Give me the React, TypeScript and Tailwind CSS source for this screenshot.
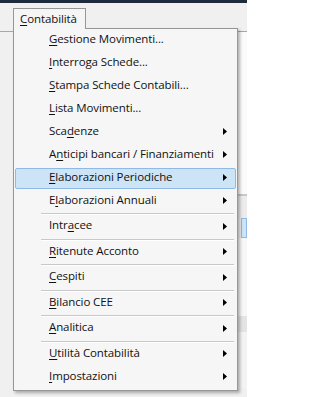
import React from "react";

type Item = {
  pre: string;
  key: string;
  post: string;
  arrow?: boolean;
  sep?: boolean;
  active?: boolean;
};

const items: Item[] = [
  { pre: "", key: "G", post: "estione Movimenti..." },
  { pre: "", key: "I", post: "nterroga Schede..." },
  { pre: "", key: "S", post: "tampa Schede Contabili..." },
  { pre: "", key: "L", post: "ista Movimenti..." },
  { pre: "Sca", key: "d", post: "enze", arrow: true },
  { pre: "A", key: "n", post: "ticipi bancari / Finanziamenti", arrow: true },
  { pre: "", key: "E", post: "laborazioni Periodiche", arrow: true, active: true },
  { pre: "E", key: "l", post: "aborazioni Annuali", arrow: true, sep: true },
  { pre: "Intr", key: "a", post: "cee", arrow: true, sep: true },
  { pre: "", key: "R", post: "itenute Acconto", arrow: true, sep: true },
  { pre: "", key: "C", post: "espiti", arrow: true, sep: true },
  { pre: "", key: "B", post: "ilancio CEE", arrow: true, sep: true },
  { pre: "", key: "A", post: "nalitica", arrow: true, sep: true },
  { pre: "", key: "U", post: "tilità Contabilità", arrow: true },
  { pre: "", key: "I", post: "mpostazioni", arrow: true },
];

function Arrow() {
  return (
    <svg width="4" height="7" viewBox="0 0 4 7" className="shrink-0 mb-[2px]">
      <polygon points="0,0 4,3.5 0,7" fill="#000" />
    </svg>
  );
}

function Row({ it }: { it: Item }) {
  return (
    <div className="h-[23px] flex items-center">
      <div
        className={
          "h-[21px] w-[221px] flex items-center pl-[33px] pr-[8px] rounded-[2px] border " +
          (it.active ? "bg-[#cde4f7] border-[#8fb9e6]" : "border-transparent")
        }
      >
        <span className="flex-1 whitespace-nowrap text-[#111] pb-[4px]">
          {it.pre}
          <span className="underline underline-offset-[2px]">{it.key}</span>
          {it.post}
        </span>
        {it.arrow && <Arrow />}
      </div>
    </div>
  );
}

export default function App() {
  return (
    <div
      className="relative w-[247px] h-[397px] overflow-hidden bg-[#f0f0f0] text-[11.5px] tracking-[-0.1px] leading-none"
      style={{ fontFamily: '"Open Sans", "Noto Sans", sans-serif' }}
    >
      {/* background window */}
      <div className="h-[3px] bg-[#1d2b3c]" />
      <div className="h-[29px] bg-[#f0f0f0] border-b border-[#a7a7a7]" />
      <div className="flex">
        <div className="w-[238px]" />
        <div className="flex-1 flex flex-col">
          <div className="h-[162px] bg-[#fbfbfb]" />
          <div className="h-[2px] bg-[#c8c8c8]" />
          <div className="h-[22px] bg-[#ececec]" />
          <div className="h-[20px] bg-[#cde4f7] border border-[#8fb9e6] ml-[3px]" />
          <div className="h-[78px] bg-[#f7f7f7]" />
          <div className="h-[16px] bg-[#e4e4e4]" />
          <div className="h-[56px] bg-[#f3f3f3]" />
        </div>
      </div>

      {/* menu overlay */}
      <div className="absolute left-[13px] top-[8px] flex flex-col">
        <div className="relative z-10 w-[73px] h-[21px] -mb-[1px] bg-[#f5f5f5] border border-b-0 border-[#979797] flex items-center pl-[6px] text-[#111]">
          <span className="pb-[1px]">
            <span className="underline underline-offset-[2px]">C</span>ontabilità
          </span>
        </div>
        <div className="w-[225px] bg-[#f6f6f6] border border-[#979797] pt-0 pb-[1px] pl-[1px] shadow-[2px_2px_3px_rgba(0,0,0,0.3)]">
          {items.map((it, i) => (
            <React.Fragment key={i}>
              <Row it={it} />
              {it.sep && (
                <div className="h-[2.5px] flex flex-col justify-start ml-[26px] mr-[3px]">
                  <div className="h-px bg-[#c8c8c8]" />
                  <div className="h-px bg-white" />
                </div>
              )}
            </React.Fragment>
          ))}
        </div>
      </div>
    </div>
  );
}
